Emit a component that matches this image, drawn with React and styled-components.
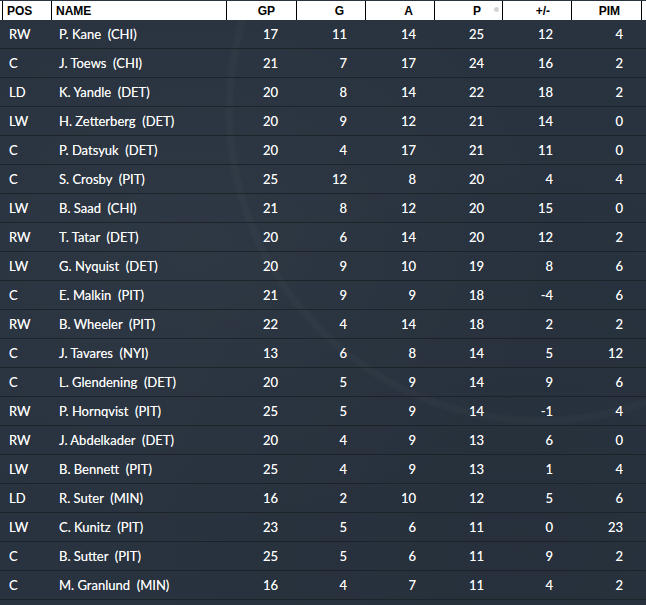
import React from 'react';
import styled, { createGlobalStyle } from 'styled-components';

const GlobalStyle = createGlobalStyle`
  html, body {
    margin: 0;
    padding: 0;
    background: #29333f;
  }
`;

const COLS = '50px 175px 70px 69px 69px 68px 69px 70px';

const players = [
  ['RW', 'P. Kane', 'CHI', 17, 11, 14, 25, 12, 4],
  ['C', 'J. Toews', 'CHI', 21, 7, 17, 24, 16, 2],
  ['LD', 'K. Yandle', 'DET', 20, 8, 14, 22, 18, 2],
  ['LW', 'H. Zetterberg', 'DET', 20, 9, 12, 21, 14, 0],
  ['C', 'P. Datsyuk', 'DET', 20, 4, 17, 21, 11, 0],
  ['C', 'S. Crosby', 'PIT', 25, 12, 8, 20, 4, 4],
  ['LW', 'B. Saad', 'CHI', 21, 8, 12, 20, 15, 0],
  ['RW', 'T. Tatar', 'DET', 20, 6, 14, 20, 12, 2],
  ['LW', 'G. Nyquist', 'DET', 20, 9, 10, 19, 8, 6],
  ['C', 'E. Malkin', 'PIT', 21, 9, 9, 18, -4, 6],
  ['RW', 'B. Wheeler', 'PIT', 22, 4, 14, 18, 2, 2],
  ['C', 'J. Tavares', 'NYI', 13, 6, 8, 14, 5, 12],
  ['C', 'L. Glendening', 'DET', 20, 5, 9, 14, 9, 6],
  ['RW', 'P. Hornqvist', 'PIT', 25, 5, 9, 14, -1, 4],
  ['RW', 'J. Abdelkader', 'DET', 20, 4, 9, 13, 6, 0],
  ['LW', 'B. Bennett', 'PIT', 25, 4, 9, 13, 1, 4],
  ['LD', 'R. Suter', 'MIN', 16, 2, 10, 12, 5, 6],
  ['LW', 'C. Kunitz', 'PIT', 23, 5, 6, 11, 0, 23],
  ['C', 'B. Sutter', 'PIT', 25, 5, 6, 11, 9, 2],
  ['C', 'M. Granlund', 'MIN', 16, 4, 7, 11, 4, 2],
];

const headers = [
  { label: 'POS', align: 'left' },
  { label: 'NAME', align: 'left' },
  { label: 'GP' },
  { label: 'G' },
  { label: 'A' },
  { label: 'P', sorted: true },
  { label: '+/-' },
  { label: 'PIM' },
];

const Board = styled.div`
  width: 646px;
  height: 605px;
  overflow: hidden;
  background-color: #29333f;
  background-image:
    radial-gradient(circle at 540px 110px, transparent 306px, rgba(255, 255, 255, 0.018) 308px, rgba(255, 255, 255, 0.018) 313px, transparent 316px),
    radial-gradient(ellipse at 30% 40%, rgba(255, 255, 255, 0.025), transparent 60%),
    radial-gradient(ellipse at 80% 90%, rgba(0, 0, 0, 0.06), transparent 60%);
`;

const HeaderRow = styled.div`
  display: grid;
  grid-template-columns: ${COLS};
  padding-left: 2px;
  height: 20px;
  background: #ffffff;
  border-top: 1px solid #2b3440;
  box-sizing: border-box;
`;

const HeadCell = styled.div`
  position: relative;
  display: flex;
  align-items: center;
  justify-content: ${p => (p.$align === 'left' ? 'flex-start' : 'flex-end')};
  padding: ${p => (p.$align === 'left' ? '1px 0 0 4px' : '1px 21px 0 0')};
  border-right: 1px solid #000;
  border-left: ${p => (p.$first ? '1px solid #000' : 'none')};
  font-family: 'Liberation Sans', Arial, sans-serif;
  font-weight: 700;
  font-size: 12px;
  color: #000;
  box-sizing: border-box;
`;

const SortMark = styled.span`
  position: absolute;
  right: 3px;
  top: 6px;
  width: 5px;
  height: 5px;
  border-radius: 50%;
  background: #d4d4d4;
`;

const Row = styled.div`
  display: grid;
  grid-template-columns: ${COLS};
  padding-left: 2px;
  height: 29px;
  border-bottom: 1px solid #1e232a;
  box-sizing: border-box;
`;

const Cell = styled.div`
  display: flex;
  align-items: center;
  justify-content: ${p => (p.$align === 'left' ? 'flex-start' : 'flex-end')};
  padding: ${p => (p.$align === 'left' ? '0 0 0 7px' : '0 19px 0 0')};
  font-family: Lato, 'Noto Sans', sans-serif;
  font-size: 13px;
  color: #ffffff;
  white-space: pre;
  text-shadow: 0 0 0.4px rgba(255, 255, 255, 0.6);
`;

export default function App() {
  return (
    <>
      <GlobalStyle />
      <Board>
        <HeaderRow>
          {headers.map((h, i) => (
            <HeadCell key={h.label} $align={h.align} $first={i === 0}>
              {h.label}
              {h.sorted && <SortMark />}
            </HeadCell>
          ))}
        </HeaderRow>
        {players.map(([pos, name, team, ...stats]) => (
          <Row key={name}>
            <Cell $align="left">{pos}</Cell>
            <Cell $align="left">{`${name}  (${team})`}</Cell>
            {stats.map((v, i) => (
              <Cell key={i}>{v}</Cell>
            ))}
          </Row>
        ))}
      </Board>
    </>
  );
}
